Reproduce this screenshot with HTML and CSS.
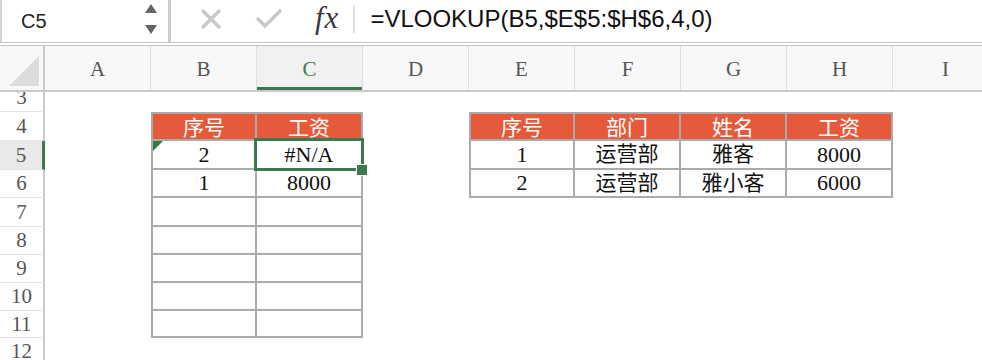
FILE: index.html
```html
<!DOCTYPE html>
<html lang="zh-CN">

<head>
    <meta charset="UTF-8">
    <meta name="viewport" content="width=device-width, initial-scale=1.0">
    <title>VLOOKUP</title>
    <link rel="stylesheet" href="styles.css">
</head>

<body>
    <!-- Barra de fórmulas -->
    <div class="formula-bar">
        <div class="name-box">
            <span class="cell-ref">C5</span>
            <svg class="spin" width="14" height="34" viewBox="0 0 14 34">
                <polygon points="7,2 13,11 1,11" fill="#666" />
                <polygon points="1,23 13,23 7,32" fill="#666" />
            </svg>
        </div>
        <div class="fx-tools">
            <svg class="ico" width="24" height="24" viewBox="0 0 24 24">
                <path d="M3 3 L21 21 M21 3 L3 21" stroke="#c9c9c9" stroke-width="3.4" fill="none" />
            </svg>
            <svg class="ico" width="28" height="24" viewBox="0 0 28 24">
                <path d="M2 11 L10 19 L26 3" stroke="#c9c9c9" stroke-width="3.4" fill="none" />
            </svg>
            <span class="fx">fx</span>
            <span class="sep"></span>
        </div>
        <div class="formula">=VLOOKUP(B5,$E$5:$H$6,4,0)</div>
    </div>

    <!-- Hoja -->
    <div class="sheet">
        <div class="heads">
            <div class="corner"><div class="corner-tri"></div></div>
            <div class="ch">A</div>
            <div class="ch">B</div>
            <div class="ch on">C</div>
            <div class="ch">D</div>
            <div class="ch">E</div>
            <div class="ch">F</div>
            <div class="ch">G</div>
            <div class="ch">H</div>
            <div class="ch">I</div>
        </div>

        <div class="rows">
            <div class="grid">
                <div class="rn">3</div><div></div><div></div><div></div><div></div><div></div><div></div><div></div><div></div><div></div>

                <div class="rn">4</div><div></div>
                <div class="t h l">序号</div><div class="t h">工资</div>
                <div></div>
                <div class="t h l">序号</div><div class="t h">部门</div><div class="t h">姓名</div><div class="t h">工资</div>
                <div></div>

                <div class="rn on">5</div><div></div>
                <div class="t l mark">2</div><div class="t sel">#N/A</div>
                <div></div>
                <div class="t l">1</div><div class="t zh">运营部</div><div class="t zh">雅客</div><div class="t">8000</div>
                <div></div>

                <div class="rn">6</div><div></div>
                <div class="t l">1</div><div class="t">8000</div>
                <div></div>
                <div class="t l">2</div><div class="t zh">运营部</div><div class="t zh">雅小客</div><div class="t">6000</div>
                <div></div>

                <div class="rn">7</div><div></div><div class="t l"></div><div class="t"></div><div></div><div></div><div></div><div></div><div></div><div></div>
                <div class="rn">8</div><div></div><div class="t l"></div><div class="t"></div><div></div><div></div><div></div><div></div><div></div><div></div>
                <div class="rn">9</div><div></div><div class="t l"></div><div class="t"></div><div></div><div></div><div></div><div></div><div></div><div></div>
                <div class="rn">10</div><div></div><div class="t l"></div><div class="t"></div><div></div><div></div><div></div><div></div><div></div><div></div>
                <div class="rn">11</div><div></div><div class="t l"></div><div class="t"></div><div></div><div></div><div></div><div></div><div></div><div></div>

                <div class="rn">12</div><div></div><div></div><div></div><div></div><div></div><div></div><div></div><div></div><div></div>
            </div>
        </div>
    </div>
</body>

</html>
```

FILE: styles.css
```css
* {
    box-sizing: border-box;
}

body {
    margin: 0;
    width: 982px;
    height: 360px;
    overflow: hidden;
    background-color: white;
    font-family: 'Liberation Sans', 'Noto Sans CJK SC', sans-serif;
    color: #222;
}

/* Barra de fórmulas */
.formula-bar {
    display: flex;
    height: 46px;
    border-bottom: 4px double #c4c4c4;
}

.name-box {
    width: 171px;
    display: flex;
    align-items: center;
    justify-content: space-between;
    padding: 0 10px 0 19px;
    border-left: 2px solid #d6d6d6;
    border-right: 3px solid #cdcdcd;
}

.cell-ref {
    font-size: 20px;
    color: #222;
}

.spin {
    margin-top: -4px;
}

.fx-tools {
    display: flex;
    align-items: center;
    padding-left: 28px;
    margin-top: -4px;
}

.ico {
    margin-right: 32px;
}

.fx {
    font-family: 'Liberation Serif', serif;
    font-style: italic;
    font-size: 31px;
    color: #3a3a3a;
    letter-spacing: 1px;
    margin-top: -2px;
}

.sep {
    width: 2px;
    height: 28px;
    background-color: #dedede;
    margin-left: 14px;
}

.formula {
    display: flex;
    align-items: center;
    padding-left: 15px;
    margin-top: -4px;
    font-size: 24px;
    color: #111;
}

/* Cabeceras de columna */
.heads {
    display: grid;
    grid-template-columns: 45px repeat(9, 106px);
    height: 46px;
    border-bottom: 2px solid #cacaca;
    background-color: #f8f8f8;
}

.corner {
    display: flex;
    justify-content: flex-end;
    align-items: flex-end;
    padding: 0 4px 4px 0;
    border-right: 2px solid #cacaca;
}

.corner-tri {
    width: 30px;
    height: 30px;
    background-color: #dcdcdc;
    clip-path: polygon(100% 0, 100% 100%, 0 100%);
}

.ch {
    display: flex;
    align-items: center;
    justify-content: center;
    border-right: 1px solid #dedede;
    font-family: 'Liberation Serif', serif;
    font-size: 21px;
    color: #555;
    padding-top: 2px;
}

.ch.on {
    color: #3b7a4e;
    background-color: #f1f1f1;
    box-shadow: inset 0 -3px 0 #3b7a4e;
}

/* Filas */
.rows {
    height: 268px;
    overflow: hidden;
}

.grid {
    display: grid;
    grid-template-columns: 45px repeat(9, 106px);
    grid-template-rows: 28px 29px 29px 28px 29px 28px 28px 28px 27px 28px;
    margin-top: -8px;
    font-family: 'Liberation Serif', 'Noto Sans CJK SC', serif;
    font-size: 22px;
}

.grid > div {
    display: flex;
    align-items: center;
    justify-content: center;
    line-height: 1;
}

.rn {
    border-right: 2px solid #cacaca;
    border-bottom: 1px solid #e4e4e4;
    font-size: 21px;
    color: #555;
}

.rn.on {
    background-color: #e9e9e9;
    border-right: 3px solid #3b7a4e;
}

/* Tablas */
.t {
    border-right: 2px solid #ababab;
    border-bottom: 2px solid #ababab;
    color: #111;
}

.t.l {
    border-left: 2px solid #ababab;
}

.t.zh {
    font-size: 21px;
}

.t.h {
    border-top: 2px solid #ababab;
    background-color: #e65a3b;
    color: white;
    font-family: 'Noto Sans CJK SC', sans-serif;
    font-size: 21px;
}

.mark {
    position: relative;
}

.mark::before {
    content: '';
    position: absolute;
    top: 0;
    left: 0;
    width: 10px;
    height: 10px;
    background-color: #2f7d3a;
    clip-path: polygon(0 0, 100% 0, 0 100%);
}

/* Celda seleccionada */
.sel {
    position: relative;
}

.sel::after {
    content: '';
    position: absolute;
    top: -3px;
    left: -3px;
    right: -3px;
    bottom: -3px;
    border: 3px solid #3b7a4e;
}

.sel::before {
    content: '';
    position: absolute;
    right: -6px;
    bottom: -7px;
    width: 10px;
    height: 10px;
    background-color: #3b7a4e;
    outline: 1px solid white;
    z-index: 1;
}
```
